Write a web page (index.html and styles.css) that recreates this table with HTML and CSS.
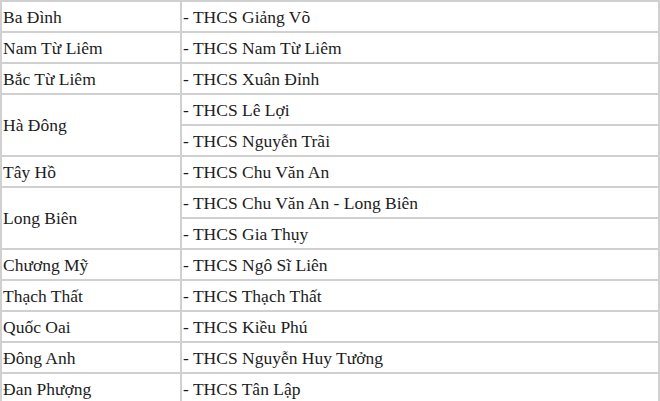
FILE: index.html
```html
<!DOCTYPE html>
<html lang="vi">
<head>
<meta charset="utf-8">
<link rel="stylesheet" href="styles.css">
</head>
<body>
<table class="schools">
<tr><td class="district">Ba Đình</td><td class="school">- THCS Giảng Võ</td></tr>
<tr><td class="district">Nam Từ Liêm</td><td class="school">- THCS Nam Từ Liêm</td></tr>
<tr><td class="district">Bắc Từ Liêm</td><td class="school">- THCS Xuân Đỉnh</td></tr>
<tr><td class="district" rowspan="2">Hà Đông</td><td class="school">- THCS Lê Lợi</td></tr>
<tr><td class="school">- THCS Nguyễn Trãi</td></tr>
<tr><td class="district">Tây Hồ</td><td class="school">- THCS Chu Văn An</td></tr>
<tr><td class="district" rowspan="2">Long Biên</td><td class="school">- THCS Chu Văn An - Long Biên</td></tr>
<tr><td class="school">- THCS Gia Thụy</td></tr>
<tr><td class="district">Chương Mỹ</td><td class="school">- THCS Ngô Sĩ Liên</td></tr>
<tr><td class="district">Thạch Thất</td><td class="school">- THCS Thạch Thất</td></tr>
<tr><td class="district">Quốc Oai</td><td class="school">- THCS Kiều Phú</td></tr>
<tr><td class="district">Đông Anh</td><td class="school">- THCS Nguyễn Huy Tưởng</td></tr>
<tr><td class="district">Đan Phượng</td><td class="school">- THCS Tân Lập</td></tr>
</table>
</body>
</html>
```
FILE: styles.css
```css
html, body {
  margin: 0;
  padding: 0;
  background: #ffffff;
}
.schools {
  border-collapse: collapse;
  width: 660px;
  font-family: "Liberation Serif", "Times New Roman", serif;
  font-size: 17.5px;
  color: #1c1c1c;
}
.schools td {
  border: 2px solid #d0d0d0;
  height: 31px;
  padding: 0 1px;
  vertical-align: middle;
  line-height: 20px;
  box-sizing: border-box;
}
.district {
  width: 180px;
}
```
